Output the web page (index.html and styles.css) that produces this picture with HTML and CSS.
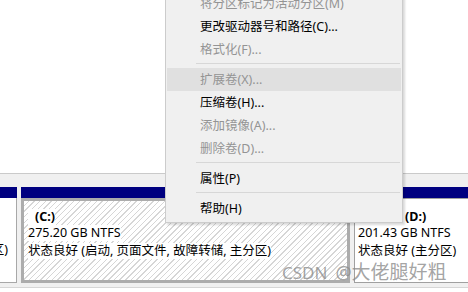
FILE: index.html
```html
<!DOCTYPE html>
<html>
<head>
	<title>磁盘管理</title>
    <link rel="stylesheet" href="styles.css">
</head>
<body>
	<div class="screen">
		<div class="volume-list"></div>

		<div class="disk-map">
			<div class="part part-edge">
				<div class="part-head"></div>
				<div class="part-body">
					<span class="line line-status">状态良好 (恢复分区)</span>
				</div>
			</div>

			<div class="part part-c">
				<div class="part-head"></div>
				<div class="part-body">
					<span class="line line-name">(C:)</span>
					<span class="line">275.20 GB NTFS</span>
					<span class="line line-status">状态良好 (启动, 页面文件, 故障转储, 主分区)</span>
				</div>
			</div>

			<div class="part part-d">
				<div class="part-head"></div>
				<div class="part-body">
					<span class="line line-name">(D:)</span>
					<span class="line">201.43 GB NTFS</span>
					<span class="line line-status">状态良好 (主分区)</span>
				</div>
			</div>
		</div>

		<!-- context menu for the selected volume -->
		<ul class="menu">
			<li class="item disabled">将分区标记为活动分区(M)</li>
			<li class="item">更改驱动器号和路径(C)...</li>
			<li class="item disabled">格式化(F)...</li>
			<li class="sep"></li>
			<li class="item disabled hover">扩展卷(X)...</li>
			<li class="item">压缩卷(H)...</li>
			<li class="item disabled">添加镜像(A)...</li>
			<li class="item disabled">删除卷(D)...</li>
			<li class="sep"></li>
			<li class="item">属性(P)</li>
			<li class="sep"></li>
			<li class="item">帮助(H)</li>
		</ul>

		<div class="watermark"><span class="wm-latin">CSDN</span> <span class="wm-at">@</span>大佬腿好粗</div>
	</div>
</body>
</html>
```

FILE: styles.css
```css
body {
    margin: 0;
    font-family: "Noto Sans", "Noto Sans CJK SC", sans-serif;
    color: #000;
}

.screen {
    position: relative;
    width: 468px;
    height: 292px;
    overflow: hidden;
    background-color: #fff;
}

.volume-list {
    height: 173px;
    background-color: #fff;
}

.disk-map {
    display: flex;
    gap: 4px;
    padding: 13px 0 4px 0;
    background-color: #f0f0f0;
    border-top: 1px solid #cacaca;
    border-bottom: 1px solid #d6d6d6;
}

.part {
    display: flex;
    flex-direction: column;
    flex-shrink: 0;
}

.part-head {
    height: 11px;
    background-color: #000080;
}

.part-body {
    box-sizing: border-box;
    height: 85px;
    display: flex;
    flex-direction: column;
    align-items: flex-start;
    font-size: 12.5px;
    white-space: nowrap;
    overflow: hidden;
}

.line {
    display: block;
    height: 16px;
    line-height: 16px;
    background-color: #fff;
}

.line-name {
    font-weight: bold;
}

.line-status {
    margin-top: 2px;
}

/* partition cut off on the left edge */
.part-edge {
    width: 17px;
}

.part-edge .part-body {
    align-items: flex-end;
    padding: 42px 8px 0 0;
    background-color: #fff;
    border-right: 1px solid #a8a8a8;
    border-bottom: 1px solid #a8a8a8;
}

/* selected volume, hatched */
.part-c {
    width: 329px;
}

.part-c .part-body {
    padding: 8px 0 0 4px;
    border: 3px solid #acacac;
    background: repeating-linear-gradient(135deg, #fff 0 3px, #d6d6d6 3px 4px);
}

.part-c .line-name {
    padding-left: 7px;
}

.part-d {
    width: 130px;
}

.part-d .part-body {
    padding: 10px 0 0 3px;
    border: 1px solid #a0a0a0;
    background-color: #fff;
}

.part-d .line-name {
    padding-left: 47px;
}

.menu {
    position: absolute;
    top: -11px;
    left: 165px;
    width: 234px;
    margin: 0;
    padding: 2px 1px;
    list-style: none;
    background-color: #f0f0f0;
    border: 1px solid #cccccc;
    box-shadow: 2px 2px 2px rgba(0, 0, 0, 0.15);
    font-size: 12.5px;
}

.item {
    height: 23px;
    line-height: 23px;
    padding-left: 33px;
    color: #000;
    white-space: nowrap;
}

.item.disabled {
    color: #949494;
}

.item.hover {
    background-color: #e0e0e0;
}

.sep {
    height: 1px;
    margin: 2px 1px 4px 29px;
    background-color: #d7d7d7;
}

.watermark {
    position: absolute;
    left: 282px;
    top: 261px;
    font-size: 19px;
    line-height: 22px;
    color: rgba(140, 140, 140, 0.8);
    white-space: nowrap;
}

.wm-latin {
    font-size: 17px;
}

.wm-at {
    margin-left: 3px;
    font-size: 18px;
}
```
